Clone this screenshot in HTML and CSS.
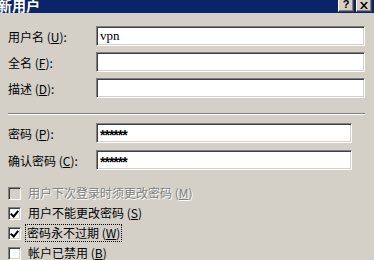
FILE: index.html
```html
<!DOCTYPE html>
<html lang="zh-CN">

<head>
    <meta charset="UTF-8">
    <meta name="viewport" content="width=device-width, initial-scale=1.0">
    <title>新用户</title>
    <link rel="stylesheet" href="styles.css">
</head>

<body>
    <div class="dialog">
        <div class="titlebar">
            <span class="title">新用户</span>
            <div class="tbtns">
                <span class="tbtn">?</span>
                <span class="tbtn close">
                    <svg width="8" height="7" viewBox="0 0 8 7">
                        <path d="M0 0h2l2 2.5L6 0h2L5 3.5 8 7H6L4 4.5 2 7H0l3-3.5z" fill="#000" />
                    </svg>
                </span>
            </div>
        </div>

        <div class="content">
            <div class="fields">
                <label for="username">用户名 (<u>U</u>):</label>
                <div class="textbox"><span class="val serif">vpn</span></div>
                <label for="fullName">全名 (<u>F</u>):</label>
                <div class="textbox"></div>
                <label for="desc">描述 (<u>D</u>):</label>
                <div class="textbox"></div>
            </div>

            <div class="separator"></div>

            <div class="fields pw">
                <label>密码 (<u>P</u>):</label>
                <div class="textbox"><span class="val stars">******</span></div>
                <label>确认密码 (<u>C</u>):</label>
                <div class="textbox"><span class="val stars">******</span></div>
            </div>

            <div class="checks">
                <div class="check disabled">
                    <span class="box"></span>
                    <span class="text">用户下次登录时须更改密码 (<u>M</u>)</span>
                </div>
                <div class="check">
                    <span class="box checked"></span>
                    <span class="text">用户不能更改密码 (<u>S</u>)</span>
                </div>
                <div class="check">
                    <span class="box checked"></span>
                    <span class="text focus">密码永不过期 (<u>W</u>)</span>
                </div>
                <div class="check">
                    <span class="box"></span>
                    <span class="text">帐户已禁用 (<u>B</u>)</span>
                </div>
            </div>
        </div>
    </div>
</body>

</html>
```

FILE: styles.css
```css
body {
    margin: 0;
    background-color: #d4d0c8;
    font-family: "Noto Sans CJK SC", "Liberation Sans", sans-serif;
    font-size: 12px;
    color: #000;
}

.dialog {
    width: 374px;
    height: 260px;
    overflow: hidden;
}

.titlebar {
    height: 13px;
    background-color: #0a246a;
    display: flex;
    justify-content: space-between;
    align-items: flex-end;
    overflow: hidden;
}

.title {
    color: #fff;
    font-weight: bold;
    font-size: 14px;
    line-height: 14px;
    margin-left: -2px;
    margin-bottom: 1px;
}

.tbtns {
    display: flex;
    gap: 2px;
    margin-right: 2px;
    align-self: flex-start;
}

.tbtn {
    width: 16px;
    height: 12px;
    box-sizing: border-box;
    background-color: #d4d0c8;
    border-bottom: 1px solid #404040;
    border-right: 1px solid #404040;
    border-left: 1px solid #fff;
    box-shadow: inset -1px -1px #808080;
    display: flex;
    justify-content: center;
    align-items: flex-end;
    font-family: "Liberation Sans", sans-serif;
    font-weight: bold;
    font-size: 11px;
    line-height: 10px;
    padding-bottom: 2px;
}

.content {
    padding: 13px 0 0 8px;
}

.fields {
    display: grid;
    grid-template-columns: 88px 269px;
    grid-auto-rows: 20px;
    row-gap: 6px;
    align-items: center;
}

.fields label {
    line-height: 14px;
    padding-top: 1px;
}

.textbox {
    height: 20px;
    box-sizing: border-box;
    background-color: #fff;
    border-top: 1px solid #808080;
    border-left: 1px solid #808080;
    border-bottom: 1px solid #fff;
    border-right: 1px solid #fff;
    box-shadow: inset 1px 1px #404040, inset -1px -1px #d4d0c8;
    display: flex;
    align-items: center;
    padding-left: 3px;
}

.val.serif {
    font-family: "Liberation Serif", serif;
    font-size: 13px;
}

.val.stars {
    font-family: "Liberation Sans", sans-serif;
    font-size: 14px;
    font-weight: bold;
    letter-spacing: -1px;
    padding-top: 4px;
}

.separator {
    width: 357px;
    height: 1px;
    background-color: #808080;
    border-bottom: 1px solid #fff;
    margin-top: 15px;
}

.fields.pw {
    grid-template-columns: 88px 256px;
    row-gap: 7px;
    margin-top: 8px;
}

.checks {
    margin-top: 13px;
    display: flex;
    flex-direction: column;
}

.check {
    height: 20px;
    display: flex;
    align-items: center;
    gap: 6px;
}

.box {
    width: 13px;
    height: 13px;
    box-sizing: border-box;
    background-color: #fff;
    border-top: 1px solid #808080;
    border-left: 1px solid #808080;
    border-bottom: 1px solid #fff;
    border-right: 1px solid #fff;
    box-shadow: inset 1px 1px #404040, inset -1px -1px #d4d0c8;
    position: relative;
}

.box.checked::after {
    content: "";
    position: absolute;
    left: 2px;
    top: 1px;
    width: 3px;
    height: 6px;
    border-right: 2px solid #000;
    border-bottom: 2px solid #000;
    transform: translateX(1px) rotate(40deg);
}

.check.disabled .box {
    background-color: #d4d0c8;
}

.check.disabled .text {
    color: #808080;
    text-shadow: 1px 1px #fff;
}

.text {
    line-height: 14px;
    padding: 1px 1px;
}

.text.focus {
    outline: 1px dotted #000;
    margin-left: -1px;
}
```
